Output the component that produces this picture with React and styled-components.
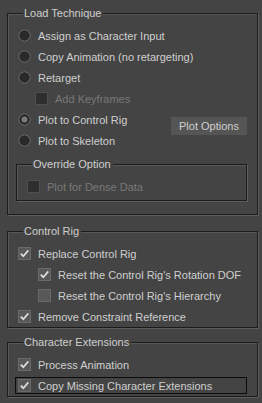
import React from "react";
import styled, { createGlobalStyle } from "styled-components";

const Global = createGlobalStyle`
  html, body { margin: 0; padding: 0; background: #444444; }
  body { font-family: "Liberation Sans", Arial, sans-serif; font-size: 11px; color: #cfcfcf; }
`;

const Page = styled.div`
  width: 262px;
  height: 403px;
  box-sizing: border-box;
  padding: 7px 4px 0 7px;
  display: flex;
  flex-direction: column;
  background: #444444;
`;

const Group = styled.fieldset`
  margin: ${(p) => p.$mt || 0}px ${(p) => p.$mr || 0}px ${(p) => p.$mb || 0}px ${(p) => p.$ml || 0}px;
  padding: 5px 0 ${(p) => p.$pb || 0}px ${(p) => p.$pl || 10}px;
  border: 1px solid #1c1c1c;
  box-shadow: 1px 1px 0 #5e5e5e, inset 1px 1px 0 #585858;
  min-width: 0;
  display: flex;
  flex-direction: column;
`;

const Legend = styled.legend`
  margin-left: 5px;
  padding: 0 2px 0 1px;
  line-height: 13px;
  font-size: 11px;
  color: #cfcfcf;
  background: #444444;
`;

const Row = styled.div`
  height: 21px;
  display: flex;
  align-items: center;
  gap: 7px;
  padding-left: ${(p) => p.$indent || 0}px;
  color: ${(p) => (p.$disabled ? "#787878" : "#cfcfcf")};
  white-space: nowrap;
`;

const FocusRow = styled.div`
  height: 21px;
  display: flex;
  align-items: center;
  margin-left: -3px;
  margin-right: 10px;
`;

const FocusBox = styled.div`
  flex: 1;
  height: 15px;
  border: 1px solid #0c0c0c;
  display: flex;
  align-items: center;
  gap: 7px;
  padding-left: 2px;
  white-space: nowrap;
`;

const PlotBlock = styled.div`
  display: flex;
  align-items: flex-start;
`;

const PlotCol = styled.div`
  display: flex;
  flex-direction: column;
  flex: 1;
`;

const Button = styled.div`
  width: 76px;
  height: 18px;
  margin-top: 8px;
  margin-right: 10px;
  background: #555555;
  color: #d0d0d0;
  display: flex;
  align-items: center;
  justify-content: center;
`;

const Radio = ({ checked }) => (
  <svg width="13" height="13" viewBox="0 0 13 13">
    <circle cx="6.5" cy="6.5" r="5.5" fill="#2a2a2a" stroke="#767676" strokeWidth="1" />
    <circle cx="6.5" cy="6.5" r="4.5" fill="none" stroke="#222222" strokeWidth="1" />
    {checked && <circle cx="6.5" cy="6.5" r="3" fill="#7a7a7a" />}
  </svg>
);

const Check = ({ checked, disabled }) => (
  <svg width="13" height="13" viewBox="0 0 13 13">
    <rect
      x="0.5"
      y="0.5"
      width="12"
      height="12"
      fill={disabled ? "#2e2e2e" : "#585858"}
      stroke={disabled ? "#4e4e4e" : "#6a6a6a"}
    />
    {checked && (
      <path d="M2.8 6.6 L5.3 9.2 L10.3 3.4" fill="none" stroke="#dedede" strokeWidth="1.7" />
    )}
  </svg>
);

export default function App() {
  return (
    <>
      <Global />
      <Page>
        <Group $pb={13} $mb={10}>
          <Legend>Load Technique</Legend>
          <Row><Radio />Assign as Character Input</Row>
          <Row><Radio />Copy Animation (no retargeting)</Row>
          <Row><Radio />Retarget</Row>
          <Row $indent={17} $disabled><Check disabled />Add Keyframes</Row>
          <PlotBlock>
            <PlotCol>
              <Row><Radio checked />Plot to Control Rig</Row>
              <Row><Radio />Plot to Skeleton</Row>
            </PlotCol>
            <Button>Plot Options</Button>
          </PlotBlock>
          <Group $ml={-2} $mr={10} $mt={7} $pb={3} $pl={10}>
            <Legend>Override Option</Legend>
            <Row $disabled><Check disabled />Plot for Dense Data</Row>
          </Group>
        </Group>

        <Group $pb={0} $mb={8}>
          <Legend>Control Rig</Legend>
          <Row><Check checked />Replace Control Rig</Row>
          <Row $indent={20}><Check checked />Reset the Control Rig's Rotation DOF</Row>
          <Row $indent={20}><Check />Reset the Control Rig's Hierarchy</Row>
          <Row><Check checked />Remove Constraint Reference</Row>
        </Group>

        <Group $pb={0}>
          <Legend>Character Extensions</Legend>
          <Row><Check checked />Process Animation</Row>
          <FocusRow>
            <FocusBox><Check checked />Copy Missing Character Extensions</FocusBox>
          </FocusRow>
        </Group>
      </Page>
    </>
  );
}
